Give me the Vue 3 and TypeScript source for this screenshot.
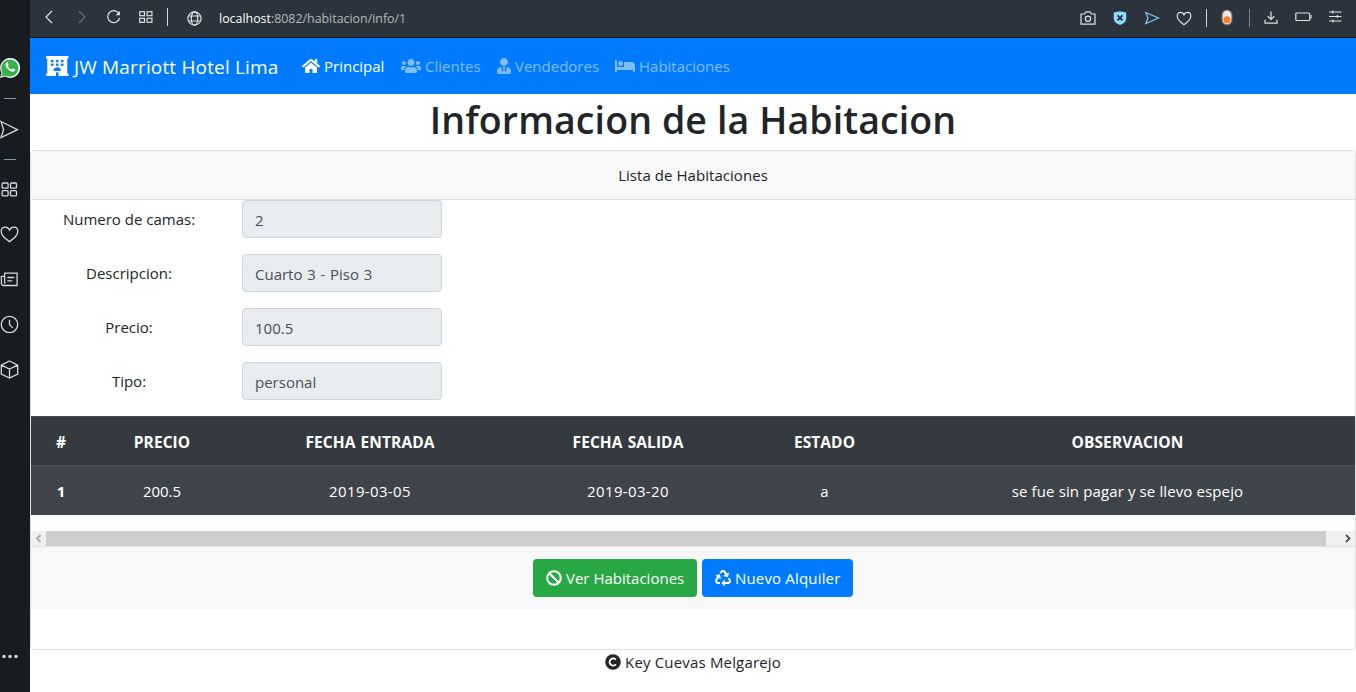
<script setup lang="ts">
interface NavItem { label: string; key: string; box: string; width: number; path: string; active?: boolean }

const hotel = 'M560 64c8.84 0 16-7.16 16-16V16c0-8.84-7.16-16-16-16H16C7.16 0 0 7.16 0 16v32c0 8.84 7.16 16 16 16h15.98v384H16c-8.84 0-16 7.16-16 16v32c0 8.84 7.16 16 16 16h240v-80c0-8.8 7.2-16 16-16h32c8.8 0 16 7.2 16 16v80h240c8.84 0 16-7.16 16-16v-32c0-8.84-7.16-16-16-16h-16V64h16zm-304 44.8c0-6.4 6.4-12.8 12.8-12.8h38.4c6.4 0 12.8 6.4 12.8 12.8v38.4c0 6.4-6.4 12.8-12.8 12.8h-38.4c-6.4 0-12.8-6.4-12.8-12.8v-38.4zm0 96c0-6.4 6.4-12.8 12.8-12.8h38.4c6.4 0 12.8 6.4 12.8 12.8v38.4c0 6.4-6.4 12.8-12.8 12.8h-38.4c-6.4 0-12.8-6.4-12.8-12.8v-38.4zm-128-96c0-6.4 6.4-12.8 12.8-12.8h38.4c6.4 0 12.8 6.4 12.8 12.8v38.4c0 6.4-6.4 12.8-12.8 12.8h-38.4c-6.4 0-12.8-6.4-12.8-12.8v-38.4zM179.2 256h-38.4c-6.4 0-12.8-6.4-12.8-12.8v-38.4c0-6.4 6.4-12.8 12.8-12.8h38.4c6.4 0 12.8 6.4 12.8 12.8v38.4c0 6.4-6.4 12.8-12.8 12.8zM192 384c0-53.02 42.98-96 96-96s96 42.98 96 96H192zm256-140.8c0 6.4-6.4 12.8-12.8 12.8h-38.4c-6.4 0-12.8-6.4-12.8-12.8v-38.4c0-6.4 6.4-12.8 12.8-12.8h38.4c6.4 0 12.8 6.4 12.8 12.8v38.4zm0-96c0 6.4-6.4 12.8-12.8 12.8h-38.4c-6.4 0-12.8-6.4-12.8-12.8v-38.4c0-6.4 6.4-12.8 12.8-12.8h38.4c6.4 0 12.8 6.4 12.8 12.8v38.4z'

const nav: NavItem[] = [
  { label: 'Principal', key: 'principal', active: true, box: '0 0 576 512', width: 18, path: 'M280.37 148.26L96 300.11V464a16 16 0 0 0 16 16l112.06-.29a16 16 0 0 0 15.92-16V368a16 16 0 0 1 16-16h64a16 16 0 0 1 16 16v95.64a16 16 0 0 0 16 16.05L464 480a16 16 0 0 0 16-16V300L295.67 148.26a12.19 12.19 0 0 0-15.3 0zM571.6 251.47L488 182.56V44.05a12 12 0 0 0-12-12h-56a12 12 0 0 0-12 12v72.61L318.47 43a48 48 0 0 0-61 0L4.34 251.47a12 12 0 0 0-1.6 16.9l25.5 31A12 12 0 0 0 45.15 301l235.22-193.74a12.19 12.19 0 0 1 15.3 0L530.9 301a12 12 0 0 0 16.9-1.6l25.5-31a12 12 0 0 0-1.7-16.93z' },
  { label: 'Clientes', key: 'clientes', box: '0 0 640 512', width: 20, path: 'M96 224c35.3 0 64-28.7 64-64s-28.7-64-64-64-64 28.7-64 64 28.7 64 64 64zm448 0c35.3 0 64-28.7 64-64s-28.7-64-64-64-64 28.7-64 64 28.7 64 64 64zm32 32h-64c-17.6 0-33.5 7.1-45.1 18.6 40.3 22.1 68.9 62 75.1 109.4h66c17.7 0 32-14.3 32-32v-32c0-35.3-28.7-64-64-64zm-256 0c61.9 0 112-50.1 112-112S381.9 32 320 32 208 82.1 208 144s50.1 112 112 112zm76.8 32h-8.3c-20.8 10-43.9 16-68.5 16s-47.6-6-68.5-16h-8.3C179.6 288 128 339.6 128 403.2V432c0 26.5 21.5 48 48 48h288c26.5 0 48-21.5 48-48v-28.8c0-63.6-51.6-115.2-115.2-115.2zm-223.7-13.4C161.5 263.1 145.6 256 128 256H64c-35.3 0-64 28.7-64 64v32c0 17.7 14.3 32 32 32h65.9c6.3-47.4 34.9-87.3 75.2-109.4z' },
  { label: 'Vendedores', key: 'vendedores', box: '0 0 448 512', width: 14, path: 'M224 256c70.7 0 128-57.3 128-128S294.7 0 224 0 96 57.3 96 128s57.3 128 128 128zm95.8 32.6L272 480l-32-136 32-56h-96l32 56-32 136-47.8-191.4C56.9 292 0 350.3 0 422.4V464c0 26.5 21.5 48 48 48h352c26.5 0 48-21.5 48-48v-41.6c0-72.1-56.9-130.4-128.2-133.8z' },
  { label: 'Habitaciones', key: 'habitaciones', box: '0 0 640 512', width: 20, path: 'M176 256c44.11 0 80-35.89 80-80s-35.89-80-80-80-80 35.89-80 80 35.89 80 80 80zm352-128H304c-8.84 0-16 7.16-16 16v144H64V80c0-8.84-7.16-16-16-16H16C7.16 64 0 71.16 0 80v352c0 8.84 7.16 16 16 16h32c8.84 0 16-7.16 16-16v-48h512v48c0 8.84 7.16 16 16 16h32c8.84 0 16-7.16 16-16V240c0-61.86-50.14-112-112-112z' },
]

const fields = [
  { label: 'Numero de camas:', value: '2' },
  { label: 'Descripcion:', value: 'Cuarto 3 - Piso 3' },
  { label: 'Precio:', value: '100.5' },
  { label: 'Tipo:', value: 'personal' },
]

const headers = ['#', 'PRECIO', 'FECHA ENTRADA', 'FECHA SALIDA', 'ESTADO', 'OBSERVACION']
const rows = [['1', '200.5', '2019-03-05', '2019-03-20', 'a', 'se fue sin pagar y se llevo espejo']]
</script>

<template>
  <div class="window">
    <aside class="side">
      <svg class="wa" width="21" height="22" viewBox="0 0 21 22">
        <path d="M0 21l1.400-5.200A10 10 0 1 1 5.200 19.600z" fill="#e9efec" />
        <path d="M1.300 19.600l1.200-4.200A8.500 8.500 0 1 1 5.500 18.400z" fill="#35b04a" />
        <path d="M6.500 5.400c-1.600 1.300-1.200 3.500.7 5.900 2.300 2.900 5.100 4.300 7.100 3 .9-.6 1.200-1.500.9-1.900l-2.300-1.200c-.7-.2-1 1.300-1.600 1.200-1.400-.4-2.900-1.900-3.500-3.200-.1-.6 1-1 .8-1.700l-.9-2c-.3-.5-.8-.5-1.200-.1z" fill="#fff" />
      </svg>
      <i class="dash d1"></i>
      <svg class="send" width="19" height="20" viewBox="0 0 19 20"><path d="M1 1.500L17.500 9.700 1 17.600 3.600 9.700z" /></svg>
      <i class="dash d2"></i>
      <svg class="grid" width="17" height="15" viewBox="0 0 17 15"><rect x="1.100" y="1" width="6" height="5.200" rx="1" /><rect x="9.500" y="1" width="6" height="5.200" rx="1" /><rect x="1.100" y="8.700" width="6" height="5.200" rx="1" /><rect x="9.500" y="8.700" width="6" height="5.200" rx="1" /></svg>
      <svg class="heart" width="19" height="17" viewBox="0 0 19 17"><path d="M9.500 15.600C6.300 13.400 1.200 9.800 1.200 5.400 1.200 2.800 3 1.100 5.200 1.100c2 0 3.500 1.200 4.300 3 .8-1.800 2.300-3 4.300-3 2.200 0 4 1.700 4 4.300 0 4.400-5.100 8-8.300 10.200z" /></svg>
      <svg class="news" width="19" height="15" viewBox="0 0 19 15"><path d="M4.600 1.200h12.500v12.300H3.200A1.900 1.900 0 0 1 1.400 11.700V4.400h3.200zM4.600 4.400v7.300M7.300 5.500h7M7.300 8.800h5" /></svg>
      <svg class="clock" width="19" height="19" viewBox="0 0 19 19"><circle cx="9.500" cy="9.500" r="8.200" /><path d="M9.500 4.700v5l3.200 3.200" /></svg>
      <svg class="cube" width="19" height="19" viewBox="0 0 19 19"><path d="M9.500 1l8.200 4.100v9L9.500 18l-8.200-3.900v-9zM1.300 5.100l8.200 4 8.200-4M9.500 9.100V18" /></svg>
      <svg class="more" width="18" height="5" viewBox="0 0 18 5"><circle cx="3" cy="2.500" r="1.700" /><circle cx="9" cy="2.500" r="1.700" /><circle cx="15" cy="2.500" r="1.700" /></svg>
    </aside>

    <div class="main">
      <header class="chrome">
        <div class="tools left">
          <svg class="lt" width="10" height="14" viewBox="0 0 10 14"><path d="M8 1L2 7l6 6" /></svg>
          <svg class="gt" width="10" height="14" viewBox="0 0 10 14"><path d="M2 1l6 6-6 6" /></svg>
          <svg class="reload" width="14" height="14" viewBox="0 0 14 14"><path d="M12.600 8A6 6 0 1 1 11.800 3.300" /><path d="M12.900.8v4.400H8.700z" class="solid" /></svg>
          <svg class="speed" width="14" height="13" viewBox="0 0 14 13"><rect x=".7" y=".7" width="4.800" height="4" /><rect x="8.100" y=".7" width="4.800" height="4" /><rect x=".7" y="7.300" width="4.800" height="4" /><rect x="8.100" y="7.300" width="4.800" height="4" /></svg>
          <i class="sep"></i>
          <svg class="globe" width="15" height="15" viewBox="0 0 15 15"><circle cx="7.500" cy="7.500" r="6.600" /><ellipse cx="7.500" cy="7.500" rx="3.200" ry="6.600" /><path d="M1.500 5h12M1.500 10h12" /></svg>
          <span class="url"><b>localhost</b>:8082/habitacion/info/1</span>
        </div>
        <div class="tools right">
          <svg width="16" height="16" viewBox="0 0 16 16"><path d="M1 4h3.500L6 1.800h4L11.500 4H15v10.200H1z" /><circle cx="8" cy="8.800" r="2.600" /></svg>
          <svg width="16" height="16" viewBox="0 0 16 16"><path d="M8 1.300l6.200 1.200v6c0 3.300-3 5.200-6.200 6.400-3.200-1.200-6.200-3.100-6.200-6.400v-6z" fill="#8edbff" stroke="none" /><path d="M5.500 5.300l5 5m0-5l-5 5" stroke="#26323b" stroke-width="1.800" /></svg>
          <svg width="16" height="16" viewBox="0 0 16 16"><path d="M1.700 2.500L14.500 8 1.700 13.700 4 8z" stroke="#82cbed" /></svg>
          <svg width="16" height="16" viewBox="0 0 16 16"><path d="M8 14.700C5 12.700 1.200 9.600 1.200 6.100c0-2.200 1.400-3.700 3.300-3.700 1.700 0 2.900 1 3.500 2.500.6-1.500 1.800-2.500 3.500-2.500 1.900 0 3.300 1.500 3.300 3.700 0 3.500-3.800 6.600-6.800 8.600z" /></svg>
          <i class="sep bright"></i>
          <svg class="pill" width="12" height="17" viewBox="0 0 12 17"><rect x="1" y="1" width="10" height="15" rx="5" fill="#eee9e3" stroke="#6c6765" /><circle cx="6" cy="10.700" r="3.500" fill="#ff7a2e" stroke="none" /></svg>
          <i class="sep dim"></i>
          <svg class="down" width="14" height="13" viewBox="0 0 14 13"><path d="M7 .5v8M3.700 5.300L7 8.500l3.300-3.200M1 8.700v3.400h12V8.700" /></svg>
          <svg class="batt" width="17" height="10" viewBox="0 0 17 10"><rect x=".8" y="1" width="14" height="7.500" rx="1" /><path d="M16 3v3.500" /></svg>
          <svg class="sliders" width="13" height="13" viewBox="0 0 13 13"><path d="M0 2h12.500M0 6.500h12.500M0 11h12.500M3.800.5v3M8.500 5v3M3.800 9.500v3" /></svg>
        </div>
      </header>

      <nav class="navbar">
        <a class="brand"><svg width="22.500" height="20" viewBox="0 0 576 512"><path :d="hotel" /></svg><span>JW Marriott Hotel Lima</span></a>
        <a v-for="n in nav" :key="n.key" class="link" :class="[n.key, { active: n.active }]">
          <svg :width="n.width" height="16" :viewBox="n.box"><path :d="n.path" /></svg><span>{{ n.label }}</span>
        </a>
      </nav>

      <h1>Informacion de la Habitacion</h1>

      <section class="card">
        <div class="card-head">Lista de Habitaciones</div>
        <div class="form">
          <div v-for="f in fields" :key="f.label" class="row">
            <label>{{ f.label }}</label>
            <div class="input">{{ f.value }}</div>
          </div>
        </div>
        <table>
          <colgroup><col class="c1" /><col class="c2" /><col class="c3" /><col class="c4" /><col class="c5" /><col class="c6" /></colgroup>
          <thead><tr><th v-for="h in headers" :key="h">{{ h }}</th></tr></thead>
          <tbody>
            <tr v-for="r in rows" :key="r[0]"><td v-for="(c, i) in r" :key="i" :class="{ first: i === 0, date: i === 2 || i === 3, note: i === 5 }">{{ c }}</td></tr>
          </tbody>
        </table>
        <div class="scroll">
          <svg width="15" height="15" viewBox="0 0 15 15"><path d="M9.500 4L6 7.500 9.500 11" stroke="#a8a8a8" /></svg>
          <div class="thumb"></div>
          <svg width="15" height="15" viewBox="0 0 15 15"><path d="M6 4l3.500 3.500L6 11" stroke="#505050" /></svg>
        </div>
        <div class="actions">
          <button class="btn green">
            <svg width="16" height="16" viewBox="0 0 512 512"><path d="M256 8C119.034 8 8 119.033 8 256s111.034 248 248 248 248-111.034 248-248S392.967 8 256 8zm130.108 117.892c65.448 65.448 70 165.481 20.677 235.637L150.47 105.216c70.204-49.356 170.226-44.735 235.638 20.676zM125.892 386.108c-65.448-65.448-70-165.481-20.677-235.637L361.53 406.784c-70.203 49.356-170.226 44.736-235.638-20.676z" /></svg>
            <span>Ver Habitaciones</span>
          </button>
          <button class="btn blue">
            <svg width="16" height="16" viewBox="0 0 512 512"><path d="M184.561 261.903c3.232 13.997-12.123 24.635-24.068 17.168l-40.736-25.455-50.867 81.402C55.606 356.273 70.96 384 96.012 384H148c6.627 0 12 5.373 12 12v40c0 6.627-5.373 12-12 12H96.115c-75.334 0-121.302-83.048-81.408-146.88l50.822-81.388-40.725-25.448c-12.081-7.547-8.966-25.961 4.879-29.158l110.237-25.45c8.611-1.988 17.201 3.381 19.189 11.99l25.452 110.237zm98.561-182.915l41.289 66.076-40.74 25.457c-12.051 7.528-9 25.953 4.879 29.158l110.237 25.45c8.672 1.999 17.215-3.438 19.189-11.99l25.45-110.237c3.197-13.844-11.99-24.719-24.068-17.168l-40.687 25.424-41.263-66.082c-37.521-60.033-125.209-60.171-162.816 0l-17.963 28.766c-3.51 5.62-1.8 13.021 3.82 16.533l33.919 21.195c5.62 3.512 13.024 1.803 16.536-3.817l17.961-28.743c12.712-20.341 41.973-19.676 54.257-.022zM497.288 301.12l-27.515-44.065c-3.511-5.623-10.916-7.334-16.538-3.821l-33.861 21.159c-5.62 3.512-7.33 10.915-3.818 16.536l27.564 44.112c13.257 21.211-2.057 48.96-27.136 48.96H320V336.02c0-14.213-17.242-21.383-27.313-11.313l-80 79.981c-6.249 6.248-6.249 16.379 0 22.627l80 79.989C302.689 517.308 320 510.3 320 495.989V448h95.88c75.274 0 121.335-82.997 81.408-146.88z" /></svg>
            <span>Nuevo Alquiler</span>
          </button>
        </div>
      </section>

      <footer>
        <svg width="16" height="16" viewBox="0 0 16 16"><circle cx="8" cy="8" r="7.750" fill="#212529" /><path d="M10.900 10.400A3.600 3.600 0 1 1 10.800 5.600" fill="none" stroke="#fff" stroke-width="1.800" /></svg>
        <span>Key Cuevas Melgarejo</span>
      </footer>
    </div>
  </div>
</template>

<style>
body { margin: 0; overflow: hidden; }
</style>

<style scoped>
* { box-sizing: border-box; }
.window { display: flex; width: 1356px; height: 692px; overflow: hidden; background: #fff; color: #212529; font: 400 15px/24px "Open Sans", "Noto Sans", sans-serif; }
svg { display: block; flex: none; }

.side { width: 30px; flex: none; background: #181b20; display: flex; flex-direction: column; align-items: flex-start; padding-top: 57px; }
.side svg:not(.wa) { fill: none; stroke: #d3dbdf; stroke-width: 1.300; }
.dash { width: 12px; height: 1px; background: #8397a3; margin-left: 4px; }
.d1 { margin-top: 19px; }
.send { margin-top: 21px; }
.d2 { margin-top: 19px; }
.grid { margin: 22px 0 0 1px; }
.heart { margin-top: 29px; }
.news { margin-top: 29px; }
.clock { margin-top: 28px; }
.cube { margin-top: 26px; }
.side svg.more { margin: 275px 0 0 1px; fill: #d3dbdf; stroke: none; }

.main { flex: 1; min-width: 0; }
.chrome { height: 38px; background: #2b343c; border-bottom: 1px solid #15191d; display: flex; justify-content: space-between; }
.tools { display: flex; align-items: center; height: 34px; }
.tools svg { fill: none; stroke: #dce1e4; stroke-width: 1.200; }
.tools .solid { fill: #dce1e4; stroke: none; }
.tools.left { padding-left: 14px; }
.left .gt { margin-left: 23px; stroke: #65717a; }
.left .reload { margin-left: 20px; }
.left .speed { margin-left: 18px; }
.sep { width: 1px; height: 18px; background: #cfd4d7; margin-left: 14px; flex: none; }
.globe { margin: 2px 0 0 19px; }
.url { margin: 3px 0 0 17px; font-size: 12.400px; color: #b3b9bd; white-space: pre; }
.url b { font-weight: 400; color: #fff; }
.right { padding: 2px 14px 0 0; }
.right svg { margin-left: 16px; }
.right .bright { margin-left: 14px; }
.right .pill { margin-left: 14px; margin-top: -1px; }
.right .dim { margin-left: 16px; background: #7a848b; }
.right .down { margin-left: 14px; margin-top: -1px; }
.right .batt { margin-left: 17px; margin-top: -2px; }
.right .sliders { margin-left: 17px; margin-top: -3px; }

.navbar { height: 56px; background: #007bff; display: flex; align-items: center; padding-left: 16px; }
.brand { display: flex; align-items: center; color: #fff; font-size: 19px; letter-spacing: .16px; line-height: 30px; width: 248px; }
.navbar svg { fill: currentColor; }
.brand span { margin: 2px 0 0 5.500px; white-space: nowrap; }
.link { display: flex; align-items: center; color: rgba(255, 255, 255, .5); margin-left: 8px; white-space: nowrap; }
.link span { margin-left: 4px; }
.link.active { color: #fff; }
.principal { width: 91px; }
.clientes { width: 88px; }
.vendedores { width: 110px; }

h1 { margin: 0; height: 56px; font-size: 37.500px; letter-spacing: .1px; line-height: 48px; font-weight: 600; text-align: center; padding-top: 2px; white-space: nowrap; }

.card { height: 500px; border: 1px solid #dfdfdf; border-radius: 4px; overflow: hidden; text-align: center; }
.card-head { height: 49px; background: #f7f7f7; border-bottom: 1px solid #dfdfdf; padding-top: 12px; letter-spacing: .05px; }
.form { display: flex; flex-direction: column; gap: 16px; }
.row { display: flex; height: 38px; }
.row label { width: 196px; margin-right: 15px; padding-top: 7px; }
.input { width: 200px; border: 1px solid #ced4da; border-radius: 4px; background: #e9ecef; color: #495057; text-align: left; padding: 7px 12px; word-spacing: .8px; }

table { width: 1324px; margin-top: 16px; table-layout: fixed; border-collapse: separate; border-spacing: 0; background: #343a40; color: #fff; }
.c1 { width: 60px; }
.c2 { width: 142px; }
.c3 { width: 274px; }
.c4 { width: 242px; }
.c5 { width: 151px; }
.c6 { width: 455px; }
th { height: 51px; padding: 1px 0 0; font-size: 15.500px; letter-spacing: .08px; word-spacing: 1px; font-weight: 700; border-top: 1px solid #454d55; border-bottom: 2px solid #454d55; }
td { height: 48px; padding: 0; background: #3f444a; }
td.first { font-weight: 700; }
td.date { letter-spacing: .35px; }
td.note { letter-spacing: .12px; }

.scroll { display: flex; height: 15px; margin-top: 16px; background: #f0f0f0; }
.scroll svg { fill: none; stroke-width: 1.800; }
.thumb { width: 1280px; background: #cdcdcd; margin-right: 14px; }
.actions { height: 63px; border-top: 1px solid #dfdfdf; background: #f7f7f7; display: flex; justify-content: center; gap: 5px; padding-top: 12px; }
.btn { display: flex; align-items: center; height: 38px; border: 0; border-radius: 4px; padding: 0 13px; color: #fff; font: inherit; white-space: nowrap; }
.btn svg { fill: #fff; }
.btn span { margin-left: 4px; }
.green { width: 164px; background: #28a745; }
.blue { width: 151px; background: #007bff; letter-spacing: .17px; }

footer { display: flex; justify-content: center; align-items: center; height: 24px; letter-spacing: .17px; }
footer span { margin-left: 4px; }
</style>
